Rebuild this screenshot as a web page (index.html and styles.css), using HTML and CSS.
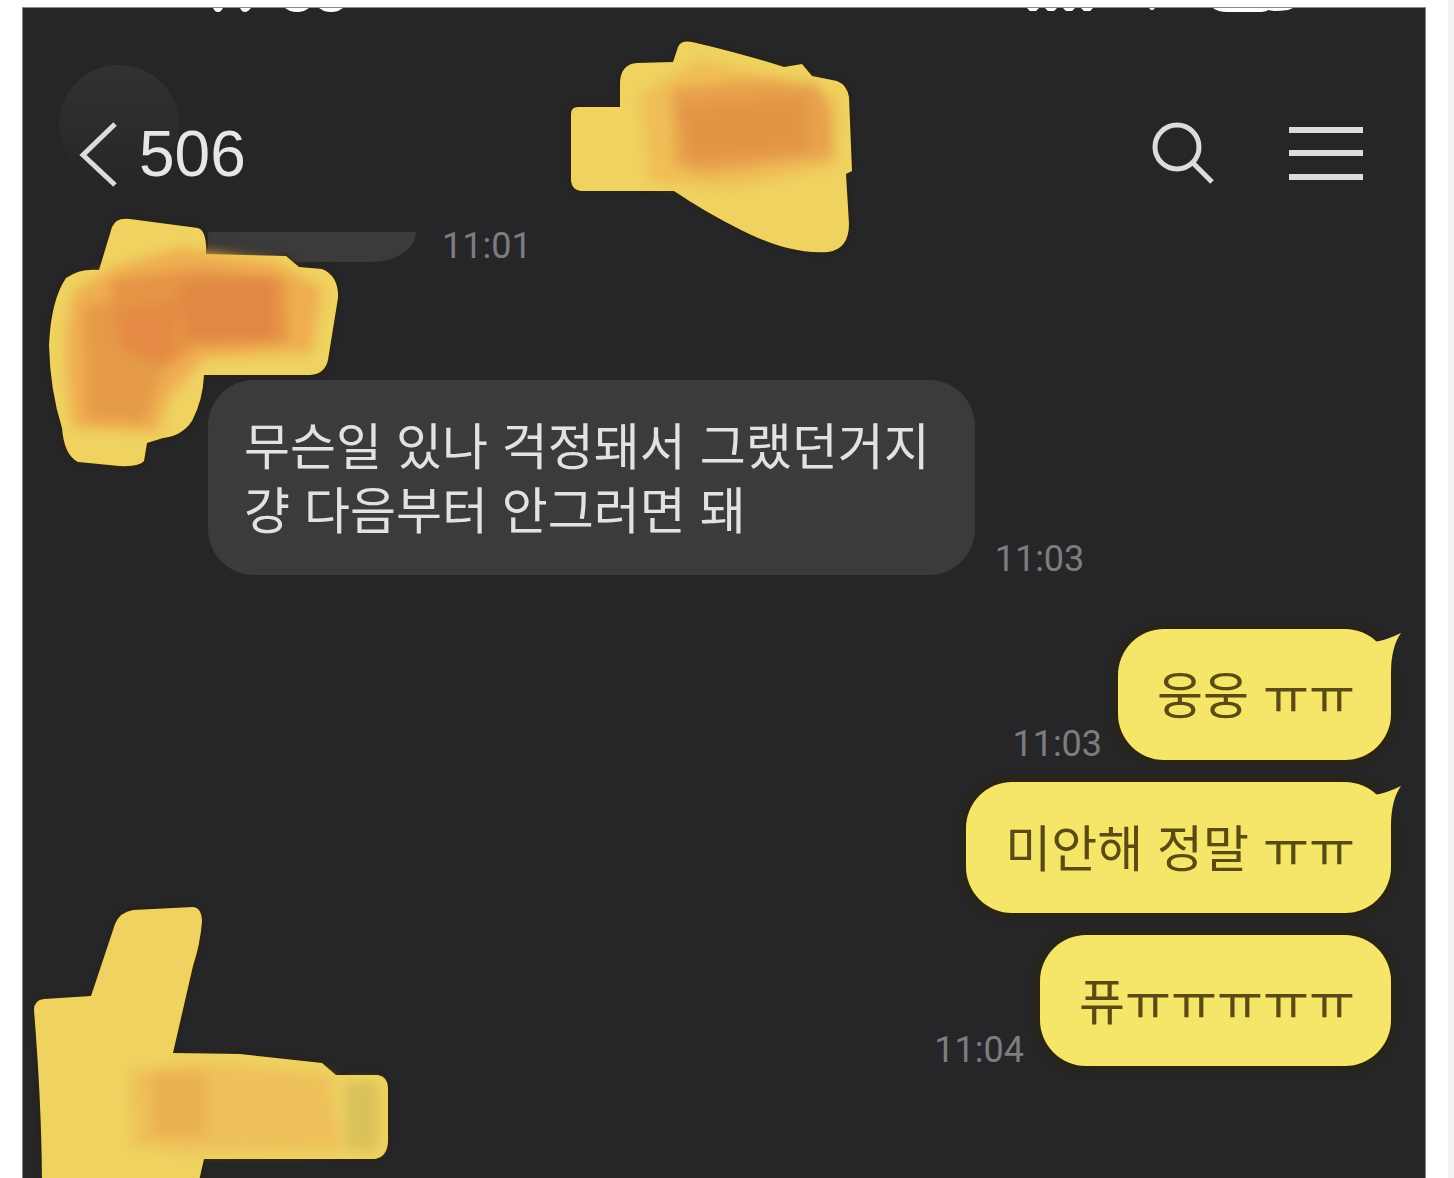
FILE: index.html
```html
<!DOCTYPE html>
<html lang="ko">

<head>
    <meta charset="UTF-8">
    <meta name="viewport" content="width=device-width, initial-scale=1.0">
    <title>채팅방</title>
    <link rel="stylesheet" href="styles.css">
</head>

<body>
    <div class="phone">
        <!-- 상태바 아래쪽 끝 -->
        <div class="status">
            <svg width="140" height="6" viewBox="0 0 140 6">
                <path d="M0 0h10l-2 3q-3 2-6 0zM27 0h11l-3 3q-3 2-6 0zM72 0h24l-5 3q-7 2-14 0zM106 0h24l-5 3q-7 2-14 0z" />
            </svg>
            <svg width="272" height="6" viewBox="0 0 272 6">
                <path d="M6 0h12l-3 3h-6zM24 0h12l-3 3h-6zM42 0h12l-3 3h-6zM60 0h12l-3 3h-6zM128 0h6l-2 2h-2z" />
                <path d="M192 0h80l-5 2q-7 1-14 1l-6-1q-2 2-10 2h-31q-9 0-14-4z" />
            </svg>
        </div>

        <header class="header">
            <svg class="avatar" width="124" height="122" viewBox="0 0 124 122">
                <circle cx="62" cy="61" r="60" fill="url(#fade)" />
                <defs>
                    <linearGradient id="fade" x1="0" y1="0" x2="0" y2="1">
                        <stop offset="0" stop-color="#323234" />
                        <stop offset=".5" stop-color="#2c2b2d" />
                        <stop offset="1" stop-color="#262628" />
                    </linearGradient>
                </defs>
            </svg>
            <button class="back" type="button" aria-label="뒤로">
                <svg width="40" height="68" viewBox="0 0 40 68">
                    <path d="M36 4L4 35L36 65" />
                </svg>
                <span>506</span>
            </button>
            <div class="tools">
                <button type="button" aria-label="검색">
                    <svg width="64" height="64" viewBox="0 0 64 64">
                        <circle cx="26" cy="25" r="22" />
                        <path d="M42 41L61 60" />
                    </svg>
                </button>
                <button type="button" aria-label="메뉴">
                    <svg width="74" height="64" viewBox="0 0 74 64">
                        <path class="bars" d="M0 8H74M0 31H74M0 55H74" />
                    </svg>
                </button>
            </div>
        </header>

        <ul class="chat">
            <li class="other cut">
                <p class="bubble"></p>
                <time>11:01</time>
            </li>
            <li class="other">
                <p class="bubble">무슨일 있나 걱정돼서 그랬던거지<br>걍 다음부터 안그러면 돼</p>
                <time>11:03</time>
            </li>
            <li class="mine first">
                <time>11:03</time>
                <p class="bubble">웅웅 ㅠㅠ
                    <svg class="tail" width="28" height="42" viewBox="0 0 28 42"><path d="M1 11Q14 9 28 2Q18 16 18 42L6 30Z" /></svg>
                </p>
            </li>
            <li class="mine">
                <p class="bubble">미안해 정말 ㅠㅠ
                    <svg class="tail" width="28" height="42" viewBox="0 0 28 42"><path d="M1 11Q14 9 28 2Q18 16 18 42L6 30Z" /></svg>
                </p>
            </li>
            <li class="mine">
                <time>11:04</time>
                <p class="bubble">퓨ㅠㅠㅠㅠㅠ</p>
            </li>
        </ul>

        <!-- 형광펜으로 가린 부분 -->
        <svg class="marker marker-title" width="300" height="230" viewBox="560 30 300 230">
            <path class="ink" d="M578 107H620V82Q621 64 637 63L673 62L678 47Q681 40 692 42Q740 53 784 67L802 64L812 76L837 81Q847 85 849 97L852 171L846 174L849 224Q849 249 828 252Q790 255 741 230Q705 212 674 191H581Q572 190 571 181V114Q571 107 578 107Z" />
            <g class="smudge">
                <path d="M640 95L700 60L800 82L838 100L836 165L735 188L650 182Z" fill="#f0b552" opacity=".7" />
                <path d="M672 92Q675 86 688 87L750 80L815 84Q834 100 831 156L705 173L675 164Z" fill="#e7a04c" />
                <path d="M680 106L805 96V150L690 159Z" fill="#e39546" />
            </g>
        </svg>
        <svg class="marker marker-name" width="310" height="270" viewBox="40 210 310 270">
            <path class="ink" d="M112 227Q116 217 130 219L198 228Q207 231 206 254L286 256L299 267L322 269Q339 276 338 298L328 360Q325 374 310 375H204Q203 400 192 421Q182 436 163 438L147 443L144 461Q140 467 119 466L78 462Q64 455 62 428Q50 390 49 345Q51 300 66 278Q80 268 99 270Z" />
            <g class="smudge">
                <path d="M74 292L112 268L180 248L275 262L322 288L312 352L205 358L168 398L158 432L74 428Q58 350 74 292Z" fill="#efae50" />
                <path d="M84 307L150 290L170 350L145 422L86 418Z" fill="#e59b48" />
                <path d="M112 280L200 268L285 278L288 342L195 348L165 368L110 340Z" fill="#e69446" />
                <path d="M118 312L180 300L168 365L125 352Z" fill="#e48a44" />
                <path d="M180 284L274 276V340L185 338Z" fill="#e18843" />
            </g>
        </svg>
        <svg class="marker marker-bottom" width="370" height="280" viewBox="30 898 370 280">
            <path class="ink" d="M115 924Q120 912 133 910L193 907Q202 908 202 922Q200 945 193 966L173 1053L240 1054L322 1063L336 1075H378Q388 1077 388 1088V1142Q387 1157 375 1159H204L197 1190H42Q42 1110 34 1010Q34 1000 44 999L91 996Z" />
            <g class="smudge">
                <path d="M130 1071L200 1062L330 1075L340 1150L190 1152L132 1146Z" fill="#eec05a" />
                <path d="M150 1073H206V1137H153Z" fill="#eab250" />
                <path d="M345 1082H378V1150H345Z" fill="#d4bc58" opacity=".8" />
            </g>
        </svg>
    </div>
</body>

</html>
```
FILE: styles.css
```css
* {
    margin: 0;
    padding: 0;
    box-sizing: border-box;
    list-style-type: none;
}

body {
    min-height: 100vh;
    padding: 7px 22px 0;
    background: #fff;
    border-right: 6px solid #f3f3f3;
    font-family: "Liberation Sans", "Noto Sans CJK KR", sans-serif;
    overflow-x: hidden;
}

.phone {
    position: relative;
    min-height: calc(100vh - 7px);
    background: #262628;
    border: 1px solid #8a8a8a;
    border-bottom: 0;
    overflow: hidden;
}

.status {
    display: flex;
    justify-content: space-between;
    height: 6px;
    padding: 0 132px 0 190px;
    fill: #fff;
}

.header {
    position: relative;
    display: flex;
    align-items: center;
    justify-content: space-between;
    height: 216px;
    padding: 64px 62px 0 56px;
}

/* 헤더 뒤로 비치는 프로필 */
.avatar {
    position: absolute;
    left: 34px;
    top: 50px;
}

.header button {
    position: relative;
    display: flex;
    align-items: center;
    border: 0;
    background: none;
    color: #e6e6e8;
    font-family: "Liberation Sans", sans-serif;
    font-size: 64px;
    line-height: 68px;
    cursor: pointer;
}

.header button svg {
    fill: none;
    stroke: #dcdcde;
    stroke-width: 5;
}

.header .back {
    gap: 20px;
}

.header .bars {
    stroke-width: 6;
}

.tools {
    display: flex;
    gap: 74px;
}

.chat {
    padding: 0 34px 60px 185px;
}

.chat li {
    display: flex;
    align-items: flex-end;
    margin-top: 22px;
}

.chat .other {
    gap: 20px;
    margin-top: 118px;
}

.chat .cut {
    gap: 26px;
    margin-top: 0;
}

.chat .mine {
    justify-content: flex-end;
    gap: 16px;
}

.chat .first {
    margin-top: 54px;
}

.chat time {
    color: #7d7d80;
    font-family: Roboto, sans-serif;
    font-size: 36px;
    line-height: 32px;
}

.bubble {
    position: relative;
    padding: 36px 45px 31px 36px;
    border-radius: 46px;
    background: #3b3b3d;
    color: #e2e2e4;
    font-size: 50px;
    line-height: 64px;
    white-space: nowrap;
}

.mine .bubble {
    padding-left: 39px;
    padding-right: 36px;
    background: #f5e568;
    color: #594b12;
    box-shadow: 0 0 6px 4px #2b250f;
}

.cut .bubble {
    width: 208px;
    height: 30px;
    padding: 0;
    border-radius: 0 0 44px 0 / 0 0 30px 0;
}

.tail {
    position: absolute;
    right: -10px;
    top: 2px;
    fill: #f5e568;
}

.marker {
    position: absolute;
    pointer-events: none;
    filter: drop-shadow(0 0 3px #2b1f05);
}

.marker .ink {
    fill: #efd260;
}

.smudge {
    filter: blur(6px);
}

.marker-title {
    left: 537px;
    top: 22px;
}

.marker-name {
    left: 17px;
    top: 202px;
}

.marker-bottom {
    left: 7px;
    top: 890px;
}
```
